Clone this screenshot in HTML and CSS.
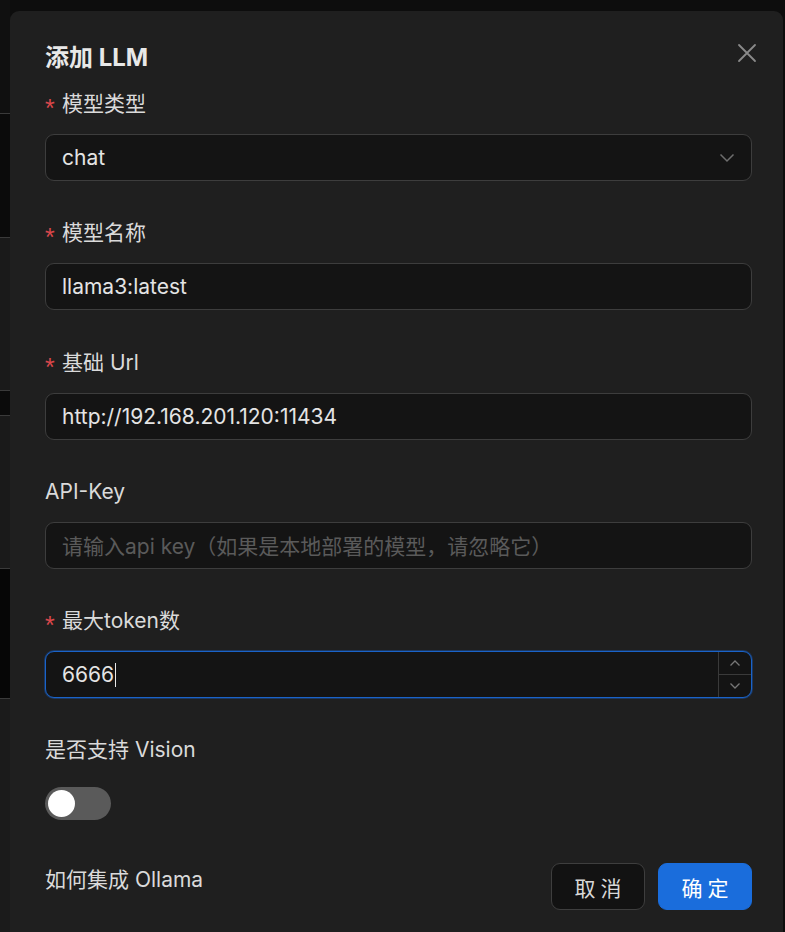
FILE: index.html
```html
<!DOCTYPE html>
<html lang="zh-CN">
<head>
<meta charset="utf-8">
<title>添加 LLM</title>
<link rel="stylesheet" href="styles.css">
</head>
<body>
<div class="page">
  <div class="side">
    <div class="seg seg-a"></div>
    <div class="seg seg-b"></div>
    <div class="seg seg-c"></div>
    <div class="seg seg-d"></div>
    <div class="seg seg-e"></div>
    <div class="seg seg-f"></div>
    <div class="seg seg-g"></div>
  </div>
  <div class="modal">
    <button class="close" aria-label="close">
      <svg width="20" height="20" viewBox="0 0 20 20"><path d="M2 2 L18 18 M18 2 L2 18" stroke="#8a8a8a" stroke-width="1.8" fill="none" stroke-linecap="round"/></svg>
    </button>
    <div class="title">添加 LLM</div>

    <div class="field">
      <div class="label"><span class="req">*</span>模型类型</div>
      <div class="control">
        <span class="value">chat</span>
        <svg class="chev" width="16" height="10" viewBox="0 0 16 10"><path d="M1.5 1.5 L8 8 L14.5 1.5" stroke="#6e6e6e" stroke-width="1.5" fill="none"/></svg>
      </div>
    </div>

    <div class="field">
      <div class="label"><span class="req">*</span>模型名称</div>
      <div class="control"><span class="value">llama3:latest</span></div>
    </div>

    <div class="field">
      <div class="label"><span class="req">*</span>基础 Url</div>
      <div class="control"><span class="value">http://192.168.201.120:11434</span></div>
    </div>

    <div class="field">
      <div class="label">API-Key</div>
      <div class="control"><span class="placeholder">请输入api key（如果是本地部署的模型，请忽略它）</span></div>
    </div>

    <div class="field">
      <div class="label"><span class="req">*</span>最大token数</div>
      <div class="control control-focus">
        <span class="value">6666</span><span class="caret"></span>
        <div class="spinner">
          <div class="spin-btn"><svg width="12" height="8" viewBox="0 0 12 8"><path d="M1.5 6.5 L6 2 L10.5 6.5" stroke="#777" stroke-width="1.3" fill="none"/></svg></div>
          <div class="spin-btn spin-down"><svg width="12" height="8" viewBox="0 0 12 8"><path d="M1.5 1.5 L6 6 L10.5 1.5" stroke="#777" stroke-width="1.3" fill="none"/></svg></div>
        </div>
      </div>
    </div>

    <div class="field field-switch">
      <div class="label">是否支持 Vision</div>
      <div class="switch"><span class="knob"></span></div>
    </div>

    <div class="footer">
      <div class="help">如何集成 Ollama</div>
      <div class="actions">
        <button class="btn btn-cancel">取消</button>
        <button class="btn btn-ok">确定</button>
      </div>
    </div>
  </div>
</div>
</body>
</html>
```
FILE: styles.css
```css
* { box-sizing: border-box; }
html, body { margin: 0; padding: 0; }
body {
  background: #0d0d0d;
  font-family: Inter, "Noto Sans CJK SC", sans-serif;
  color: #dcdcdc;
  width: 785px;
  height: 932px;
  overflow: hidden;
}
.page {
  display: flex;
  height: 932px;
}
.side {
  width: 10px;
  flex: none;
  display: flex;
  flex-direction: column;
}
.seg { border-bottom: 1px solid #3a3a3a; }
.seg-a { height: 114px; background: #101010; }
.seg-b { height: 124px; background: #0b0b0b; }
.seg-c { height: 153px; background: #1a1a1a; }
.seg-d { height: 25px; background: #0b0b0b; }
.seg-e { height: 153px; background: #1a1a1a; }
.seg-f { height: 130px; background: #060606; }
.seg-g { flex: 1; background: #1b1b1b; border-bottom: none; }

.modal {
  position: relative;
  margin-top: 11px;
  width: 773px;
  background: #1f1f1f;
  border-radius: 9px 9px 0 0;
  padding: 32px 31px 0 35px;
}
.close {
  position: absolute;
  top: 32px;
  right: 26px;
  width: 20px;
  height: 20px;
  padding: 0;
  border: none;
  background: none;
  display: flex;
}
.title {
  font-size: 24px;
  font-weight: 700;
  line-height: 30px;
  color: #e8e8e8;
  margin-bottom: 16px;
}
.field { margin-bottom: 37.3px; }
.label {
  font-size: 21px;
  line-height: 30px;
  color: #dadada;
  margin-bottom: 15px;
  display: flex;
  align-items: center;
}
.req {
  color: #d9474b;
  font-size: 25px;
  width: 17px;
  font-family: "Liberation Sans", sans-serif;
  position: relative;
  top: 4px;
}
.control {
  position: relative;
  height: 47px;
  border: 1px solid #3d3d3d;
  border-radius: 9px;
  background: #141414;
  display: flex;
  align-items: center;
  padding: 0 16px;
  font-size: 21px;
}
.value { color: #e4e4e4; }
.placeholder { color: #5a5a5a; }
.chev { margin-left: auto; margin-right: 0; }
.control-focus {
  border-color: #1a63c9;
  box-shadow: 0 0 0 1px rgba(22, 104, 220, 0.35);
  padding-right: 0;
}
.caret {
  width: 1px;
  height: 24px;
  background: #e8e8e8;
  margin-left: 1px;
}
.spinner {
  margin-left: auto;
  width: 33px;
  height: 100%;
  border-left: 1px solid #3a3a3a;
  display: flex;
  flex-direction: column;
}
.spin-btn {
  flex: 1;
  display: flex;
  align-items: center;
  justify-content: center;
}
.spin-down { border-top: 1px solid #3a3a3a; }

.field-switch .label { margin-bottom: 22px; }
.switch {
  width: 66px;
  height: 33px;
  border-radius: 17px;
  background: #5a5a5a;
  padding: 3px;
  display: flex;
}
.knob {
  width: 27px;
  height: 27px;
  border-radius: 50%;
  background: #ffffff;
}
.field-switch { margin-bottom: 43px; }

.footer {
  display: flex;
  justify-content: space-between;
  align-items: flex-start;
}
.help {
  font-size: 21px;
  line-height: 30px;
  color: #dadada;
  margin-top: 2px;
}
.actions { display: flex; gap: 13px; }
.btn {
  width: 94px;
  height: 47px;
  border-radius: 9px;
  font-family: "Noto Sans CJK SC", sans-serif;
  font-size: 21px;
  letter-spacing: 5px;
  padding: 0 0 0 5px;
  cursor: pointer;
}
.btn-cancel {
  background: #121212;
  border: 1px solid #3e3e3e;
  color: #d8d8d8;
}
.btn-ok {
  background: #1a6ddc;
  border: 1px solid #1a6ddc;
  color: #ffffff;
}
```
